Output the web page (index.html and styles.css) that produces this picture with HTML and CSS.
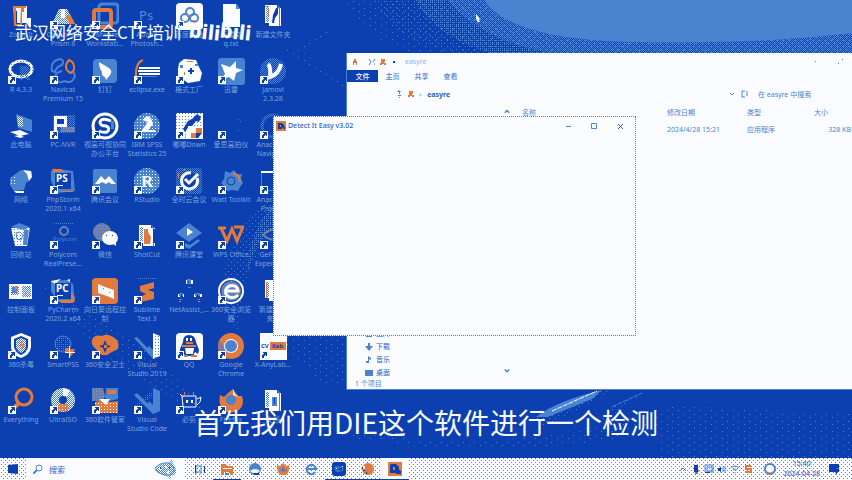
FILE: index.html
```html
<!DOCTYPE html>
<html lang="zh-CN">
<head>
<meta charset="utf-8">
<title>桌面</title>
<link rel="stylesheet" href="styles.css">
</head>
<body>
<svg class="defs" width="0" height="0" aria-hidden="true">
  <defs>
    <pattern id="bd" width="2" height="2" patternUnits="userSpaceOnUse"><path class="b" d="M0 0h1v1H0zM1 1h1v1H1z"/></pattern>
    <pattern id="bq" width="4" height="4" patternUnits="userSpaceOnUse"><path class="b" d="M0 0h1v1H0zM2 2h1v1H2zM2 0h1v1H2zM0 2h1v1H0z"/></pattern>
    <pattern id="bs" width="6" height="6" patternUnits="userSpaceOnUse"><path class="b" d="M0 1h1v1H0zM3 4h1v1H3z"/></pattern>
    <pattern id="bx" width="11" height="7" patternUnits="userSpaceOnUse"><path class="b" d="M1 1h1v1H1zM7 4h1v1H7z"/></pattern>
    <pattern id="wb" width="2" height="2" patternUnits="userSpaceOnUse"><path class="b" d="M0 0h2v2H0z"/><path class="w" d="M0 0h1v1H0zM1 1h1v1H1z"/></pattern>
    <pattern id="wq" width="3" height="3" patternUnits="userSpaceOnUse"><path class="b" d="M0 0h3v3H0z"/><path class="w" d="M1 1h1v1H1z"/></pattern>
    <pattern id="bw" width="3" height="3" patternUnits="userSpaceOnUse"><path class="w" d="M0 0h3v3H0z"/><path class="b" d="M1 1h1v1H1z"/></pattern>
    <pattern id="ob" width="3" height="3" patternUnits="userSpaceOnUse"><path class="b" d="M0 0h3v3H0z"/><path class="o" d="M0 0h1v1H0zM2 1h1v1H2z"/></pattern>
    <pattern id="ow" width="3" height="3" patternUnits="userSpaceOnUse"><path class="o" d="M0 0h3v3H0z"/><path class="w" d="M1 1h1v1H1z"/></pattern>
    <symbol id="link" viewBox="0 0 28 28"><path class="w" d="M1 19h8v8H1z"/><path class="d" d="M4 20h4v4H7v-1H6v1H5v2H3v-3h1v-1h1v-1H4z"/></symbol>
    <symbol id="folder" viewBox="0 0 28 28"><path class="w" d="M6 3h12v3h4v18H10v-3H6z"/><path class="b" d="M18 3l3 2v19h-1V7z"/><path fill="url(#wb)" d="M7 5h3v15H7z"/></symbol>
  </defs>
</svg>

<main class="desktop">
  <svg class="wallpaper" viewBox="0 0 852 480" preserveAspectRatio="xMidYMid slice" aria-hidden="true">
    <path fill="url(#bx)" d="M346 0q8 28 60 53h446V0z"/>
    <path fill="url(#bs)" d="M374 0q20 40 80 53h398V0z"/>
    <path fill="url(#bq)" d="M415 0q20 36 75 53h362V0z"/>
    <path fill="url(#bd)" d="M448 0q30 38 100 53h304V0z"/>
    <path class="b" d="M484 0q26 40 150 42 130 2 218-9V0z"/>
    <path fill="url(#bx)" d="M326 28l4 3-36 26-8-1zM284 50l14-2 46 38-4 4z"/>
    <path fill="url(#bs)" d="M273 196q-44 26-55 110l20 24q4-70 35-90z"/>
    <path fill="url(#bq)" d="M273 205q-24 24-26 70 8-34 26-46z"/>
    <path fill="url(#bx)" d="M38 280l50 60 60 48 60 30-20-30-70-60zM273 335h70v50h-20z"/>
    <path fill="url(#bs)" d="M532 418l70-28h12l-40 22-30 14zM612 408l34-17-24 18-30 16z"/>
    <path fill="url(#bx)" d="M340 430q170 30 330-24l182 8v44H660v-28q-150 34-320 6z"/>
    <path class="b" d="M536 417q20-16 66-27l-10 9-44 18z"/>
    <path class="ray" d="M552 411l45-20"/>
    <path class="ray thin" d="M612 407l30-14"/>
  </svg>

  <nav class="apps" aria-label="桌面图标">
    <a class="app" href="#"><svg viewBox="0 0 28 28"><path class="w" d="M6 4h14v12h4v9l-5-4h-9V9H6z"/><path class="o" d="M6 4h13v2H9v16h6v2H7zM14 6h3v4h-2v14h-2z"/></svg><span>ZoomIt</span></a>
    <a class="app" href="#"><svg viewBox="0 0 28 28"><path fill="url(#wb)" d="M10 7h8l8 15H3z"/><path class="o" d="M17 15l4-3 5 10h-5z"/><path class="w" d="M12 7h4v9h-4z"/><use href="#link"/></svg><span>GraphPad<br>Prism 8</span></a>
    <a class="app" href="#"><svg viewBox="0 0 28 28"><rect x="8" y="2" width="19" height="19" rx="3" fill="none" stroke="#4a84d0" stroke-width="3"/><rect x="3" y="8" width="17" height="17" rx="2" fill="none" stroke="#e07a3e" stroke-width="4"/><use href="#link"/></svg><span>VMware<br>Workstati...</span></a>
    <a class="app" href="#"><svg viewBox="0 0 28 28"><text class="mark ps" x="6" y="18">Ps</text><use href="#link"/></svg><span>Adobe<br>Photosh...</span></a>
    <a class="app" href="#"><svg viewBox="0 0 28 28"><rect class="w" x="1" y="1" width="27" height="27" rx="4"/><g fill="none" stroke="#4a84d0" stroke-width="2"><circle cx="15" cy="10" r="4"/><circle cx="10" cy="16" r="4"/><circle cx="19" cy="16" r="4"/></g><path class="o" d="M12 13h2v2h-2zM17 18h3v1h-3z"/><use href="#link"/></svg><span>百度网盘</span></a>
    <a class="app" href="#"><svg viewBox="0 0 28 28"><path class="w" d="M6 2h13l4 5v18H6z"/><path class="b" d="M19 2l4 5h-4z"/></svg><span>新建文<br>q.txt</span></a>
    <a class="app" href="#"><svg viewBox="0 0 28 28"><use href="#folder"/><path class="d" d="M17 6h2v6l-3 4-1 5h-2l1-8z"/><path class="o" d="M6 4h4v1H6zM9 7h1v8H9z"/></svg><span>新建文件夹</span></a>

    <a class="app" href="#"><svg viewBox="0 0 28 28"><ellipse cx="14" cy="12" rx="11" ry="8" fill="none" stroke="url(#bw)" stroke-width="3"/><path fill="url(#bd)" d="M13 9h8l2 4-3 4 4 6h-4l-4-6v6h-3z"/><use href="#link"/></svg><span>R 4.3.3</span></a>
    <a class="app" href="#"><svg viewBox="0 0 28 28"><g fill="none" stroke="#4a84d0" stroke-width="2"><path d="M3 14q-2-10 8-12 5 1 2 6-6 2-7 7zM13 14q-9 2-6 9 4 4 8 1 8 3 10-3 2-4-2-7"/></g><path d="M20 3q6 2 5 10l-3 3q-5-2-5-6 0-4 3-7z" fill="none" stroke="#e07a3e" stroke-width="2"/><use href="#link"/></svg><span>Navicat<br>Premium 15</span></a>
    <a class="app" href="#"><svg viewBox="0 0 28 28"><rect class="b" x="2" y="2" width="24" height="24" rx="4"/><path class="w" d="M8 5l10 6q4 3 1 7l-4 5-1-3q-4-1-3-5Q8 11 8 5z"/><use href="#link"/></svg><span>钉钉</span></a>
    <a class="app" href="#"><svg viewBox="0 0 28 28"><path d="M10 3Q2 6 3 20" fill="none" stroke="#e07a3e" stroke-width="2"/><path class="w" d="M6 10h21v2H6zM5 13h22v2H5zM6 16h21v2H6z"/><path class="b" d="M8 19h16v1H8z"/><use href="#link"/></svg><span>eclipse.exe</span></a>
    <a class="app" href="#"><svg viewBox="0 0 28 28"><path class="w" d="M4 6l5-4 12 1 3 7 3 6-2 8-12 2-10-7V12z"/><path class="d" d="M15 11h2v2h2v2h-2v2h-2v-2h-2v-2h2z"/><path class="b" d="M5 8h3v3H5zM20 7h3v2h-3z"/><path class="o" d="M12 4h6v1h-6zM9 15h1v3H9z"/><use href="#link"/></svg><span>格式工厂</span></a>
    <a class="app" href="#"><svg viewBox="0 0 28 28"><rect class="b" x="1" y="1" width="27" height="27" rx="3"/><path class="w" d="M4 7l9 3 6-6v7l7 2-7 3-2 8-5-4-7 2 3-5z"/><use href="#link"/></svg><span>迅雷</span></a>
    <a class="app" href="#"><svg viewBox="0 0 28 28"><circle cx="14" cy="14" r="13" fill="url(#bd)"/><path d="M9 7q3 3 2 13 9-3 11-13" fill="none" stroke="#fafcff" stroke-width="4"/><use href="#link"/></svg><span>jamovi<br>2.3.28</span></a>

    <a class="app" href="#"><svg viewBox="0 0 28 28"><path class="b" d="M9 2l16 6v12l-14-4z"/><path fill="url(#wb)" d="M10 4l6 2v9l-5-1z"/><path class="w" d="M3 20l10-2 9 4-9 2zM7 24l6-1 4 2-4 1z"/></svg><span>此电脑</span></a>
    <a class="app" href="#"><svg viewBox="0 0 28 28"><path fill="url(#bd)" d="M4 3h22v18H4z"/><path class="w" d="M5 4h13v11H8v6H5z"/><path class="d" d="M8 7h7v5H8z"/><path fill="url(#ob)" d="M12 15h14v5H12z"/><use href="#link"/></svg><span>PC-NVR</span></a>
    <a class="app" href="#"><svg viewBox="0 0 28 28"><circle cx="14" cy="14" r="12" fill="none" stroke="#fafcff" stroke-width="3"/><path d="M20 9q-9-4-11 1 0 4 6 4 5 2 1 6-4 1-8-1" fill="none" stroke="#fafcff" stroke-width="3"/><path class="b" d="M20 9h3v8h-3z"/><use href="#link"/></svg><span>视高可视协同<br>办公平台</span></a>
    <a class="app" href="#"><svg viewBox="0 0 28 28"><circle cx="14" cy="14" r="13" fill="url(#wq)"/><path class="w" d="M9 8l5-4 4 2 2 6-5 6h7v2H9v-2l6-8z"/><use href="#link"/></svg><span>IBM SPSS<br>Statistics 25</span></a>
    <a class="app" href="#"><svg viewBox="0 0 28 28"><path fill="url(#bw)" d="M1 1h27v26H1z"/><path class="d" d="M17 7l5-5 4 3-2 5-3-1-4 5h-3l-4 6-2-3 5-8z"/><path class="w" d="M13 14h14v13H13z"/><path class="o" d="M21 16h6v5h-6zM16 21h5v5h-5z"/><path class="d" d="M21 21h6l-4 5h-2z"/><use href="#link"/></svg><span>嘟嘟Down</span></a>
    <a class="app" href="#"><svg viewBox="0 0 28 28"><path class="b" d="M21 7h1v1h-1zM23 9h1v1h-1zM21 18h1v1h-1z"/><use href="#link"/></svg><span>爱思高拍仪</span></a>
    <a class="app" href="#"><svg viewBox="0 0 28 28"><circle cx="14" cy="14" r="11" fill="none" stroke="url(#bd)" stroke-width="3"/><use href="#link"/></svg><span>Anaconda<br>Navigator</span></a>

    <a class="app" href="#"><svg viewBox="0 0 28 28"><path class="b" d="M3 11l11-8 11 2-1 7-5 4-2 7-10 1-4-6z"/><path class="w" d="M16 3l8 1 1 6-3 4-2-7zM7 24h10v2H9z"/><path fill="url(#wq)" d="M4 11l6-2v8H4z"/></svg><span>网络</span></a>
    <a class="app" href="#"><svg viewBox="0 0 28 28"><path class="b" d="M2 4l7-2 15 2 2 20-18 2-6-12z"/><path class="o" d="M3 2h9l3 3H4z"/><path class="d" d="M6 6h16v16H6z"/><text class="mark jb" x="7" y="15">PS</text><path class="w" d="M8 18h6v1H8z"/><path class="o" d="M12 24h12v1H12z"/><use href="#link"/></svg><span>PhpStorm<br>2020.1 x64</span></a>
    <a class="app" href="#"><svg viewBox="0 0 28 28"><rect class="b" x="2" y="2" width="24" height="24" rx="2"/><path class="w" d="M4 17l6-8 4 4 4-4 7 8h-5l-2-2-3 2-4-2-3 2z"/><use href="#link"/></svg><span>腾讯会议</span></a>
    <a class="app" href="#"><svg viewBox="0 0 28 28"><circle cx="14" cy="14" r="13" fill="url(#wq)"/><text class="mark rs" x="8" y="20">R</text><use href="#link"/></svg><span>RStudio</span></a>
    <a class="app" href="#"><svg viewBox="0 0 28 28"><rect x="1" y="1" width="26" height="26" rx="3" fill="url(#bd)"/><circle cx="14" cy="14" r="9" class="d"/><path d="M22 11a8 8 0 1 1-6-5M10 12l4 4 9-9" fill="none" stroke="#fafcff" stroke-width="3"/><path class="o" d="M3 6h1v5H3zM8 2h2v1H8z"/><use href="#link"/></svg><span>全时云会议</span></a>
    <a class="app" href="#"><svg viewBox="0 0 28 28"><path class="b" d="M8 4l5 2 4-3 3 4h5l-1 5 2 4-3 4-2 4-6-1-5 1-3-5-3-3 3-4z"/><path d="M16 6q7 2 7 9" fill="none" stroke="#e07a3e" stroke-width="2"/><circle cx="14" cy="14" r="4" fill="none" stroke="#0c3fb0" stroke-width="1"/><use href="#link"/></svg><span>Watt Toolkit</span></a>
    <a class="app" href="#"><svg viewBox="0 0 28 28"><path class="w" d="M2 4h24v2H2z"/><path class="b" d="M2 6h1v15H2zM25 6h1v18H9v-1h16z"/><use href="#link"/></svg><span>Anaconda<br>Prompt</span></a>

    <a class="app" href="#"><svg viewBox="0 0 28 28"><path fill="url(#bw)" d="M4 6h19l-3 18H8z"/><path class="b" d="M4 5l8-4 11 4-6 3zM17 8h5l-2 15h-4z"/><path d="M9 11l4-1 3 3-2 5-4-1z" fill="none" stroke="#4a84d0"/></svg><span>回收站</span></a>
    <a class="app" href="#"><svg viewBox="0 0 28 28"><path fill="url(#bd)" d="M4 1h20v1H4z"/><circle cx="15" cy="9" r="4" fill="none" stroke="url(#ob)" stroke-width="2"/><text class="mark poly" x="4" y="19">Polycom</text><use href="#link"/></svg><span>Polycom<br>RealPrese...</span></a>
    <a class="app" href="#"><svg viewBox="0 0 28 28"><circle cx="11" cy="10" r="9" fill="url(#ob)"/><ellipse class="w" cx="19" cy="16" rx="8" ry="7"/><path class="w" d="M21 21h4v3z"/><path class="d" d="M15 13h1v1h-1zM21 13h1v1h-1z"/><use href="#link"/></svg><span>微信</span></a>
    <a class="app" href="#"><svg viewBox="0 0 28 28"><use href="#folder"/><path class="o" d="M11 7h4v3l3 5-1 7h-6z"/><path class="d" d="M20 7h2v14h-2z"/><use href="#link"/></svg><span>ShotCut</span></a>
    <a class="app" href="#"><svg viewBox="0 0 28 28"><path class="b" d="M14 1l13 10-13 9L1 11zM10 21l5 2 8-6 2 2-11 8-4-2z"/><path class="w" d="M12 6l6 4-6 4z"/><use href="#link"/></svg><span>腾讯课堂</span></a>
    <a class="app" href="#"><svg viewBox="0 0 28 28"><path d="M4 6l6 13 5-12 5 12 6-14M1 6h8M17 5h10" fill="none" stroke="#e07a3e" stroke-width="3"/><use href="#link"/></svg><span>WPS Office</span></a>
    <a class="app" href="#"><svg viewBox="0 0 28 28"><path d="M4 13q9-10 20 0-10 9-20 0z" fill="none" stroke="url(#ob)" stroke-width="2"/><use href="#link"/></svg><span>GeForce<br>Experience</span></a>

    <a class="app" href="#"><svg viewBox="0 0 28 28"><path class="w" d="M2 7h23v15H2z"/><path fill="url(#wb)" d="M4 9h8v9H4zM15 9h9v11h-9z"/><path class="b" d="M5 10h5v6H5z"/><path class="o" d="M8 9h3v4H8zM17 16h3v1h-3z"/></svg><span>控制面板</span></a>
    <a class="app" href="#"><svg viewBox="0 0 28 28"><path class="b" d="M2 4l16-1 6 4 2 18H9L2 14z"/><path class="w" d="M2 4l10-2-6 5zM18 3l3-1v3z"/><path class="o" d="M22 15l4 6-2 5H12l-2-3h12z"/><path class="d" d="M6 6h16v16H6z"/><text class="mark jb" x="7" y="15">PC</text><path class="w" d="M8 18h6v1H8z"/><use href="#link"/></svg><span>PyCharm<br>2020.2 x64</span></a>
    <a class="app" href="#"><svg viewBox="0 0 28 28"><rect class="o" x="1" y="1" width="26" height="26" rx="4"/><path class="w" d="M7 7l7 3 9 3v9l-7-3-9-3z"/><path class="b" d="M12 11h1v1h-1zM18 15h1v1h-1z"/><use href="#link"/></svg><span>向日葵远程控<br>制</span></a>
    <a class="app" href="#"><svg viewBox="0 0 28 28"><path fill="url(#bd)" d="M4 1h20v1H4z"/><path class="o" d="M21 5v6l-6 2 6 2v7l-14 3v-5l6-3-6-3V9z"/><use href="#link"/></svg><span>Sublime<br>Text 3</span></a>
    <a class="app" href="#"><svg viewBox="0 0 28 28"><path class="w" d="M11 3h2v4h-2zM16 3h2v4h-2zM3 17h2v3H3zM8 17h1v3H8zM19 17h2v3h-2zM25 17h2v3h-2z"/><path class="b" d="M12 2h4v5h-4zM13 10h3v1h-3zM4 16h4v3H4zM20 16h5v3h-5zM4 22h3v1H4zM22 22h3v1h-3z"/><path class="d" d="M13 4h1v2h-1zM6 17h1v2H6zM22 17h1v2h-1z"/><path class="o" d="M4 24h2v1H4zM23 24h2v1h-2z"/></svg><span>NetAssist_...</span></a>
    <a class="app" href="#"><svg viewBox="0 0 28 28"><circle cx="14" cy="14" r="12" fill="none" stroke="#fafcff" stroke-width="2"/><circle cx="14" cy="14" r="10" fill="url(#ob)"/><path d="M21 18q-4 4-9 2-5-3-3-8 3-5 9-3 3 2 3 5H9" fill="none" stroke="#fafcff" stroke-width="3"/><use href="#link"/></svg><span>360安全浏览<br>器</span></a>
    <a class="app" href="#"><svg viewBox="0 0 28 28"><use href="#folder"/><path class="o" d="M7 5h1v16H7z"/></svg><span>新建文件<br>夹 1</span></a>

    <a class="app" href="#"><svg viewBox="0 0 28 28"><path class="w" d="M14 1l10 4v10q-1 8-10 11Q4 23 4 15V5z"/><path class="d" d="M14 4l7 3v8q-1 5-7 8-6-3-7-8V7z"/><path fill="url(#wb)" d="M14 6l5 2v7q-1 4-5 6-4-2-5-6V8z"/><path class="o" d="M16 8l-4 6h3l-1 5 4-7h-3z"/><use href="#link"/></svg><span>360杀毒</span></a>
    <a class="app" href="#"><svg viewBox="0 0 28 28"><circle cx="14" cy="12" r="8" fill="url(#bq)" stroke="#4a84d0" stroke-width="1"/><path class="d" d="M13 9h2v3h-2z"/><path class="o" d="M16 16h4v5h-4zM21 17h5l-3 6-2 2z"/><path class="w" d="M20 14h1v12h-1zM16 20h10v1H16z"/><use href="#link"/></svg><span>SmartPSS</span></a>
    <a class="app" href="#"><svg viewBox="0 0 28 28"><path class="o" d="M1 8q2-6 10-4 5-3 11 1 7 3 5 12l-8 4q-4 4-10 1l-5-6q-4-3-3-8z"/><path class="d" d="M14 8l2 5 4 1-4 2-2 5-2-5-4-2 4-1z"/><path class="o" d="M13 13h3v3h-3z"/><use href="#link"/></svg><span>360安全卫士</span></a>
    <a class="app" href="#"><svg viewBox="0 0 28 28"><path fill="url(#bw)" d="M20 1l7 3v20l-7 3z"/><path class="b" d="M20 1v26l-8-9 8-8zM1 6l3-1 16 17v5z"/><path class="d" d="M20 9v9l-4-4z"/><use href="#link"/></svg><span>Visual<br>Studio 2019</span></a>
    <a class="app" href="#"><svg viewBox="0 0 28 28"><rect class="w" x="1" y="1" width="27" height="27" rx="4"/><path class="d" d="M8 10q0-7 6-7t7 7l3 8-1 4-3-2-2 4H10l-2-4-3 2v-5z"/><path class="w" d="M10 16h9l-1 6h-7zM11 6h2v3h-2zM15 6h2v3h-2z"/><path class="o" d="M11 10h7v2h-7zM7 13h14v2H7zM7 23h6v2H7zM16 23h6v2h-6z"/><use href="#link"/></svg><span>QQ</span></a>
    <a class="app" href="#"><svg viewBox="0 0 28 28"><circle class="o" cx="14" cy="14" r="13"/><path fill="url(#ob)" d="M2 8l7 10-1 7Q0 20 2 8z"/><circle class="w" cx="14" cy="14" r="7"/><circle class="b" cx="14" cy="14" r="6"/><use href="#link"/></svg><span>Google<br>Chrome</span></a>
    <a class="app" href="#"><svg viewBox="0 0 28 28"><path class="w" d="M1 1h27v27H1z"/><path class="o" d="M11 10h16v8H11z"/><text class="mark cv" x="2" y="16">CV</text><text class="mark cv" x="13" y="16">ilab</text><use href="#link"/></svg><span>X-AnyLab...</span></a>

    <a class="app" href="#"><svg viewBox="0 0 28 28"><circle cx="17" cy="10" r="8" fill="none" stroke="#e07a3e" stroke-width="3"/><path d="M12 16l-6 6" stroke="#e07a3e" stroke-width="4"/><use href="#link"/></svg><span>Everything</span></a>
    <a class="app" href="#"><svg viewBox="0 0 28 28"><circle cx="14" cy="13" r="8" fill="none" stroke="url(#wb)" stroke-width="8"/><path d="M19 19a8 8 0 0 1-10 0" fill="none" stroke="url(#ow)" stroke-width="7"/><path class="w" d="M14 1l7 2-3 6h-4z"/><use href="#link"/></svg><span>UltraISO</span></a>
    <a class="app" href="#"><svg viewBox="0 0 28 28"><path fill="url(#ob)" d="M1 1h11l2 8-2 5H1z"/><path class="b" d="M15 1h12v11l-8 2-5-3z"/><path class="o" d="M17 3h8v4h-8z"/><path fill="url(#ow)" d="M4 15l9-2 6 2 8-1v12H4z"/><path class="w" d="M8 12h11l-4 6z"/><use href="#link"/></svg><span>360软件管家</span></a>
    <a class="app" href="#"><svg viewBox="0 0 28 28"><path class="b" d="M20 1l7 3v20l-7 3-8-9 8-6zM1 8l3-2 16 16v5z"/><path class="d" d="M20 9v9l-4-4z"/><path fill="url(#bq)" d="M1 19L18 4l2 5L5 21z"/><use href="#link"/></svg><span>Visual<br>Studio Code</span></a>
    <a class="app" href="#"><svg viewBox="0 0 28 28"><path d="M7 9h14v11H8zM7 9L5 7M22 12l4-2-1 5-3 3" fill="none" stroke="#fafcff" stroke-width="1"/><path class="w" d="M11 13h2v3h-2zM16 13h2v3h-2z"/><path class="o" d="M9 5h1v3H9zM18 5h1v3h-1z"/><use href="#link"/></svg><span>必剪</span></a>
    <a class="app" href="#"><svg viewBox="0 0 28 28"><path class="o" d="M3 8l4 2 4-4 5-4 5 7 4 0q3 9-3 14-9 5-16 0-5-6-3-15z"/><circle class="b" cx="14" cy="13" r="5"/><path class="w" d="M16 2l2 5 4 3-6-2z"/><use href="#link"/></svg><span>Firefox</span></a>
    <a class="app" href="#"><svg viewBox="0 0 28 28"><use href="#folder"/><path class="b" d="M13 10h5v9h-5z"/><path class="d" d="M15 11h1v6h-1z"/></svg><span>文档</span></a>
  </nav>

  <section class="window explorer" aria-label="easyre">
    <header class="titlebar">
      <svg class="tiny" viewBox="0 0 8 8"><path class="o" d="M3 1h2v2h1v4H5V5H3v2H2V3h1z"/></svg>
      <svg class="tiny gap" viewBox="0 0 8 8"><path d="M1 1l2 3-2 3M7 1L5 4M6 6h1" fill="none" stroke="#4a84d0"/></svg>
      <svg class="tiny" viewBox="0 0 8 8"><path class="o" d="M2 1h4v3H5v1h2v2H5V6H3v1H1V5h1z"/></svg>
      <svg class="tiny" viewBox="0 0 8 8"><path class="d" d="M3 3h2v2H3z"/></svg>
      <span class="faint">easyre</span>
      <span class="spacer"></span>
      <svg class="explorer-controls" viewBox="0 0 32 8"><path class="b" d="M2 3h1v1H2zM25 5h1v1h-1zM29 1h1v1h-1z"/></svg>
    </header>
    <div class="tabs">
      <button class="tab active">文件</button><button class="tab">主页</button><button class="tab">共享</button><button class="tab">查看</button>
    </div>
    <div class="address">
      <svg class="tiny" viewBox="0 0 8 8"><path class="b" d="M4 0l2 2H5v2H4V2H2zM3 5h3v1H3zM4 7h1v1H4z"/></svg>
      <svg class="tiny" viewBox="0 0 8 8"><path class="o" d="M2 1h4v3H5v1h2v2H5V6H3v1H1V5h1z"/></svg>
      <span>›</span><strong>easyre</strong>
      <span class="spacer"></span>
      <svg class="tiny" viewBox="0 0 8 8"><path d="M2 3l2 2 2-2" fill="none" stroke="#4a84d0"/></svg>
      <svg class="tiny" viewBox="0 0 8 8"><path d="M5 1H2v6h3M7 1v5" fill="none" stroke="#4a84d0"/></svg>
      <input class="find" type="text" aria-label="搜索" placeholder="在 easyre 中搜索">
    </div>
    <div class="panes">
      <aside class="tree">
        <svg class="arrow" viewBox="0 0 8 8"><path d="M1 5l3-3 3 3" fill="none" stroke="#4a84d0" stroke-width="2"/></svg>
        <ul>
          <li><svg class="tiny" viewBox="0 0 8 8"><path class="b" d="M1 1h6v6H1z"/></svg>图片</li>
          <li><svg class="tiny" viewBox="0 0 8 8"><path class="b" d="M3 0h2v3h3L4 8 0 3h3z"/></svg>下载</li>
          <li><svg class="tiny" viewBox="0 0 8 8"><path class="b" d="M3 0l3 2v2L4 3v4H1V5h2z"/></svg>音乐</li>
          <li><svg class="tiny" viewBox="0 0 8 8"><path class="b" d="M0 1h8v6H0z"/></svg>桌面</li>
        </ul>
        <svg class="arrow down" viewBox="0 0 8 8"><path d="M1 2l3 3 3-3" fill="none" stroke="#4a84d0" stroke-width="2"/></svg>
      </aside>
      <table class="files">
        <thead><tr><th class="name">名称</th><th class="date">修改日期</th><th class="type">类型</th><th>大小</th></tr></thead>
        <tbody><tr><td class="name">easyre.exe</td><td>2024/4/28 15:21</td><td>应用程序</td><td class="size">328 KB</td></tr></tbody>
      </table>
    </div>
    <footer class="status">1 个项目</footer>
  </section>

  <section class="window dialog" aria-label="Detect It Easy">
    <header class="dialog-title">
      <svg class="die" viewBox="0 0 10 10"><path class="o" d="M0 0h10v10H0z"/><path class="d" d="M2 2h4l2 2v1l1 1v2H8L6 6v2H2z"/><path class="o" d="M4 4h1v2H4z"/></svg>
      <span>Detect It Easy v3.02</span>
      <span class="spacer"></span>
      <button class="ctl" aria-label="最小化"><svg viewBox="0 0 8 8"><path class="b" d="M2 4h5v1H2z"/></svg></button>
      <button class="ctl" aria-label="最大化"><svg viewBox="0 0 8 8"><path d="M1.5 1.5h5v5h-5z" fill="none" stroke="#4a84d0"/></svg></button>
      <button class="ctl" aria-label="关闭"><svg viewBox="0 0 8 8"><path d="M2 2l5 5M7 2L2 7" stroke="#2c61c4"/></svg></button>
    </header>
  </section>

  <div class="watermark"><span>武汉网络安全CTF培训</span><b class="brand"><i>bili</i><i>bili</i></b></div>
  <p class="caption">首先我们用DIE这个软件进行一个检测</p>
  <svg class="pointer" viewBox="0 0 8 12" aria-hidden="true"><path class="w" d="M1 0l4 5-1 1 1 2H3L1 5z"/></svg>
</main>

<footer class="taskbar">
  <button class="start" aria-label="开始"><svg viewBox="0 0 10 10"><path class="d" d="M0 1l10-1v10L0 9z"/></svg></button>
  <label class="search">
    <svg class="lens" viewBox="0 0 10 10"><circle cx="6" cy="4" r="3" fill="none" stroke="#4a84d0"/><path d="M4 6L0 10" stroke="#4a84d0" stroke-width="2"/></svg>
    <input type="text" placeholder="搜索">
    <svg class="fish" viewBox="0 0 24 20"><path fill="url(#wb)" d="M2 10q5-7 14-6l3-4 1 5q5 5 2 11l-4 1-1 3-3-3Q6 16 2 10z"/><path d="M2 9q5-6 14-5 6 3 5 9-3 4-8 3Q5 15 2 10" fill="none" stroke="#4a84d0"/><path class="w" d="M6 8h2v3H6zM12 7h2v2h-2zM14 12h2v3h-2z"/><path class="d" d="M7 8h1v2H7zM16 8h1v2h-1z"/></svg>
  </label>
  <nav class="tasks" aria-label="任务栏">
    <button class="task" aria-label="任务视图"><svg viewBox="0 0 14 14"><path d="M4 3v9M3 4h6M3 10h6M9 3v9" fill="none" stroke="#4a84d0"/><path class="d" d="M3 3h1v8H3zM12 4h1v7h-1z"/></svg></button>
    <button class="task open" aria-label="文件资源管理器"><svg viewBox="0 0 14 14"><path class="o" d="M1 2h5l1 2h6v9h-3v-3H4v3H1z"/><path class="w" d="M3 6h9v1H3z"/><path class="b" d="M5 11h4v2H5z"/></svg></button>
    <button class="task" aria-label="Edge"><svg viewBox="0 0 14 14"><circle class="b" cx="7" cy="7" r="6"/><path class="w" d="M2 9q5-4 10 0-3 1-2 3H6z"/><path class="d" d="M5 11h6v2H6z"/></svg></button>
    <button class="task" aria-label="Firefox"><svg viewBox="0 0 14 14"><path class="o" d="M1 3l3 1 3-3 3 3 3-1q1 7-3 10H5Q0 10 1 3z"/><path class="b" d="M6 5h2v2h2v2H8v1H6V9H4V7h2z"/></svg></button>
    <button class="task" aria-label="浏览器"><svg viewBox="0 0 14 14"><path d="M11 10q-2 3-5 2-4-2-3-6 2-4 6-3 3 2 3 4H4" fill="none" stroke="#4a84d0" stroke-width="2"/></svg></button>
    <button class="task open" aria-label="会议"><svg viewBox="0 0 14 14"><rect class="d" width="14" height="14" rx="3"/><path d="M3 5h5q3 0 3 2t-3 2H4zM6 4v6" fill="none" stroke="#4a84d0"/><path class="w" d="M10 4h1v1h-1zM4 6h1v1H4z"/></svg></button>
    <button class="task open" aria-label="录屏"><svg viewBox="0 0 14 14"><circle class="o" cx="8" cy="7" r="6"/><path class="d" d="M2 5h1v2H2zM3 8h2v1H3zM6 10h1v2H6z"/><path class="w" d="M3 4h2v3H3z"/></svg></button>
    <button class="task open current" aria-label="Detect It Easy"><svg viewBox="0 0 14 14"><path class="o" d="M0 0h14v14H0z"/><path class="d" d="M3 2h5l3 3v3l2 1v3H9L7 11H2V3z"/><path class="o" d="M5 5h2v3H5z"/></svg></button>
  </nav>
  <span class="spacer"></span>
  <div class="tray">
    <svg viewBox="0 0 10 10"><path d="M2 7l3-3 3 3" fill="none" stroke="#4a84d0"/></svg>
    <svg viewBox="0 0 10 10"><path class="d" d="M3 1h4v7H3z"/><path class="b" d="M4 8h3v2H4z"/><path class="o" d="M7 6h1v2H7z"/></svg>
    <svg viewBox="0 0 10 10"><path d="M1 1h8v7H1zM3 3h5v4H3z" fill="none" stroke="#4a84d0"/><path class="d" d="M1 8h5v1H1z"/></svg>
    <svg viewBox="0 0 10 10"><path class="d" d="M1 4h2l1-2v7L3 7H1z"/><path d="M6 3v5M8 2v7" stroke="#4a84d0"/></svg>
    <svg viewBox="0 0 10 10"><path d="M1 4q4-4 8 0M3 6q2-2 4 0M5 8v1" fill="none" stroke="#4a84d0"/></svg>
    <svg viewBox="0 0 10 10"><path d="M8 2H3v3h5v3H2" fill="none" stroke="#e07a3e" stroke-width="2"/></svg>
    <svg class="ring" viewBox="0 0 12 12"><circle cx="6" cy="6" r="5" fill="#fafcff" stroke="#4a84d0" stroke-width="2"/><path d="M2 8q4 4 8 0" fill="none" stroke="#e07a3e"/></svg>
  </div>
  <time class="clock">15:40<br>2024-04-28</time>
  <button class="notice" aria-label="通知"><svg viewBox="0 0 12 12"><path class="d" d="M1 1h10v8H9v3L7 9H1z"/><path class="o" d="M9 5h1v1H9z"/></svg></button>
</footer>
</body>
</html>
```

FILE: styles.css
```css
:root {
  --deep: #0c3fb0;
  --mid: #4a84d0;
  --orange: #e07a3e;
  --paper: #fafcff;
  --label: #78a3de;
}

* { box-sizing: border-box; }

body {
  margin: 0;
  height: 100vh;
  display: flex;
  flex-direction: column;
  overflow: hidden;
  background: var(--deep);
  color: var(--mid);
  font: 7px/9px "Noto Sans", "Noto Sans CJK SC", sans-serif;
}

button, input {
  margin: 0;
  padding: 0;
  border: 0;
  background: none;
  color: inherit;
  font: inherit;
}

svg { display: block; flex: none; }
.b { fill: var(--mid); }
.w { fill: var(--paper); }
.o { fill: var(--orange); }
.d { fill: var(--deep); }
.defs { position: absolute; }
.spacer { flex: 1; }

.desktop {
  position: relative;
  flex: 1;
  min-height: 0;
}

.wallpaper {
  position: absolute;
  left: 0;
  top: 0;
  width: 100vw;
  height: 100vh;
}

.ray { stroke: var(--paper); stroke-width: 1; stroke-dasharray: 5 1; }
.ray.thin { stroke: var(--mid); }

.apps {
  position: relative;
  display: grid;
  grid-template-columns: repeat(7, 42px);
  grid-auto-rows: 55px;
  padding-top: 2px;
}

.app {
  display: flex;
  flex-direction: column;
  align-items: center;
  color: var(--label);
  text-align: center;
  text-decoration: none;
  white-space: nowrap;
}

.app svg { width: 28px; height: 28px; }

.mark { font-family: "Noto Sans", sans-serif; font-weight: 700; fill: var(--paper); }
.ps { font-size: 13px; font-weight: 500; fill: var(--mid); }
.jb { font-size: 10px; }
.rs { font-family: "Liberation Serif", serif; font-size: 17px; }
.poly { font-size: 6px; font-weight: 400; fill: var(--mid); }
.cv { font-size: 6px; fill: var(--deep); }

.window {
  position: absolute;
  display: flex;
  flex-direction: column;
  background: var(--paper);
}

.explorer {
  left: 346px;
  right: 0;
  top: 53px;
  height: 337px;
  border-left: 1px solid var(--mid);
  border-bottom: 1px solid var(--mid);
}

.titlebar {
  display: flex;
  align-items: center;
  gap: 3px;
  height: 17px;
  padding: 0 4px;
}

.tiny { width: 8px; height: 8px; }
.gap { margin-left: 6px; }
.faint { color: #8fb4e6; margin-left: 4px; }
.explorer-controls { width: 32px; height: 8px; margin-right: 3px; }

.tabs { display: flex; height: 12px; }
.tab { width: 29px; font-weight: 500; }
.tab.active { width: 31px; background: var(--deep); color: var(--paper); }

.address {
  display: flex;
  align-items: center;
  gap: 4px;
  height: 24px;
  padding: 0 4px 0 48px;
}

.address strong { color: #2c61c4; margin-left: 2px; }
.find { width: 90px; margin-left: 6px; }
.find::placeholder { color: var(--mid); opacity: 1; }

.panes { display: flex; flex: 1; min-height: 0; }

.tree {
  display: flex;
  flex-direction: column;
  width: 167px;
  padding: 2px 4px 0 18px;
}

.tree ul {
  margin: auto 0 0;
  padding: 0;
  list-style: none;
}

.tree li {
  display: flex;
  align-items: center;
  gap: 3px;
  height: 13px;
  color: #2c61c4;
}

.arrow { width: 6px; height: 8px; align-self: flex-end; }
.arrow.down { margin: -12px 0 4px; }

.files {
  flex: 1;
  align-self: flex-start;
  border-collapse: collapse;
  table-layout: fixed;
}

.files th, .files td { padding: 0; font-weight: 400; text-align: left; }
.files th { height: 12px; }
.files td { height: 22px; }
.files .name { width: 153px; padding-left: 8px; }
.files .date { width: 80px; }
.files .type { width: 67px; }
.files .size { text-align: right; padding-right: 1px; }

.status { height: 10px; padding: 0 8px; }

.dialog {
  left: 273px;
  top: 116px;
  width: 363px;
  height: 220px;
  border: 1px dotted var(--mid);
}

.dialog-title {
  display: flex;
  align-items: center;
  gap: 2px;
  height: 17px;
  padding: 0 3px 0 2px;
  color: #2c61c4;
  font-weight: 500;
}

.die { width: 10px; height: 10px; }
.ctl { display: grid; place-items: center; width: 24px; height: 16px; }
.ctl svg { width: 8px; height: 8px; }

.watermark {
  position: absolute;
  left: 15px;
  top: 18px;
  display: flex;
  align-items: center;
  gap: 8px;
  color: var(--paper);
  font: 400 17px/28px "Noto Sans CJK SC", sans-serif;
}

.brand { display: flex; font: 800 20px/28px "Noto Sans", sans-serif; }
.brand i { font-style: normal; transform: rotate(6deg); }

.caption {
  position: absolute;
  left: 0;
  right: 0;
  bottom: 16px;
  margin: 0;
  color: var(--paper);
  text-align: center;
  font: 400 28px/40px "Noto Sans CJK SC", sans-serif;
}

.pointer { position: absolute; left: 475px; top: 14px; width: 8px; height: 12px; }

.taskbar {
  position: relative;
  display: flex;
  align-items: stretch;
  height: 22px;
  background-color: var(--paper);
  background-image:
    conic-gradient(at 75% 25%, var(--mid) 25%, transparent 0),
    conic-gradient(at 75% 25%, var(--mid) 25%, transparent 0);
  background-size: 4px 4px;
  background-position: 0 0, 2px 2px;
}

.start { display: grid; place-items: center; width: 26px; }
.start svg { width: 10px; height: 10px; }

.search {
  display: flex;
  align-items: center;
  gap: 6px;
  width: 159px;
  padding: 0 8px 0 7px;
  background: var(--paper);
}

.search input { flex: 1; min-width: 0; font-size: 8px; }
.search input::placeholder { color: #2c61c4; opacity: 1; }
.lens { width: 10px; height: 10px; }
.fish { width: 24px; height: 20px; }

.tasks { display: flex; }
.task {
  display: grid;
  place-items: center;
  width: 28px;
  border-bottom: 1px solid transparent;
}
.task svg { width: 14px; height: 14px; }
.task.open { border-bottom-color: var(--deep); }
.task.current { background: var(--paper); }

.tray { display: flex; align-items: center; gap: 3px; }
.tray svg { width: 10px; height: 10px; }
.tray .ring { width: 12px; height: 12px; margin-left: 8px; }

.clock {
  align-self: center;
  margin: 0 8px 0 7px;
  color: #2c61c4;
  line-height: 10px;
  text-align: center;
}

.notice { display: grid; place-items: center; width: 12px; margin-right: 12px; }
.notice svg { width: 12px; height: 12px; }
```
